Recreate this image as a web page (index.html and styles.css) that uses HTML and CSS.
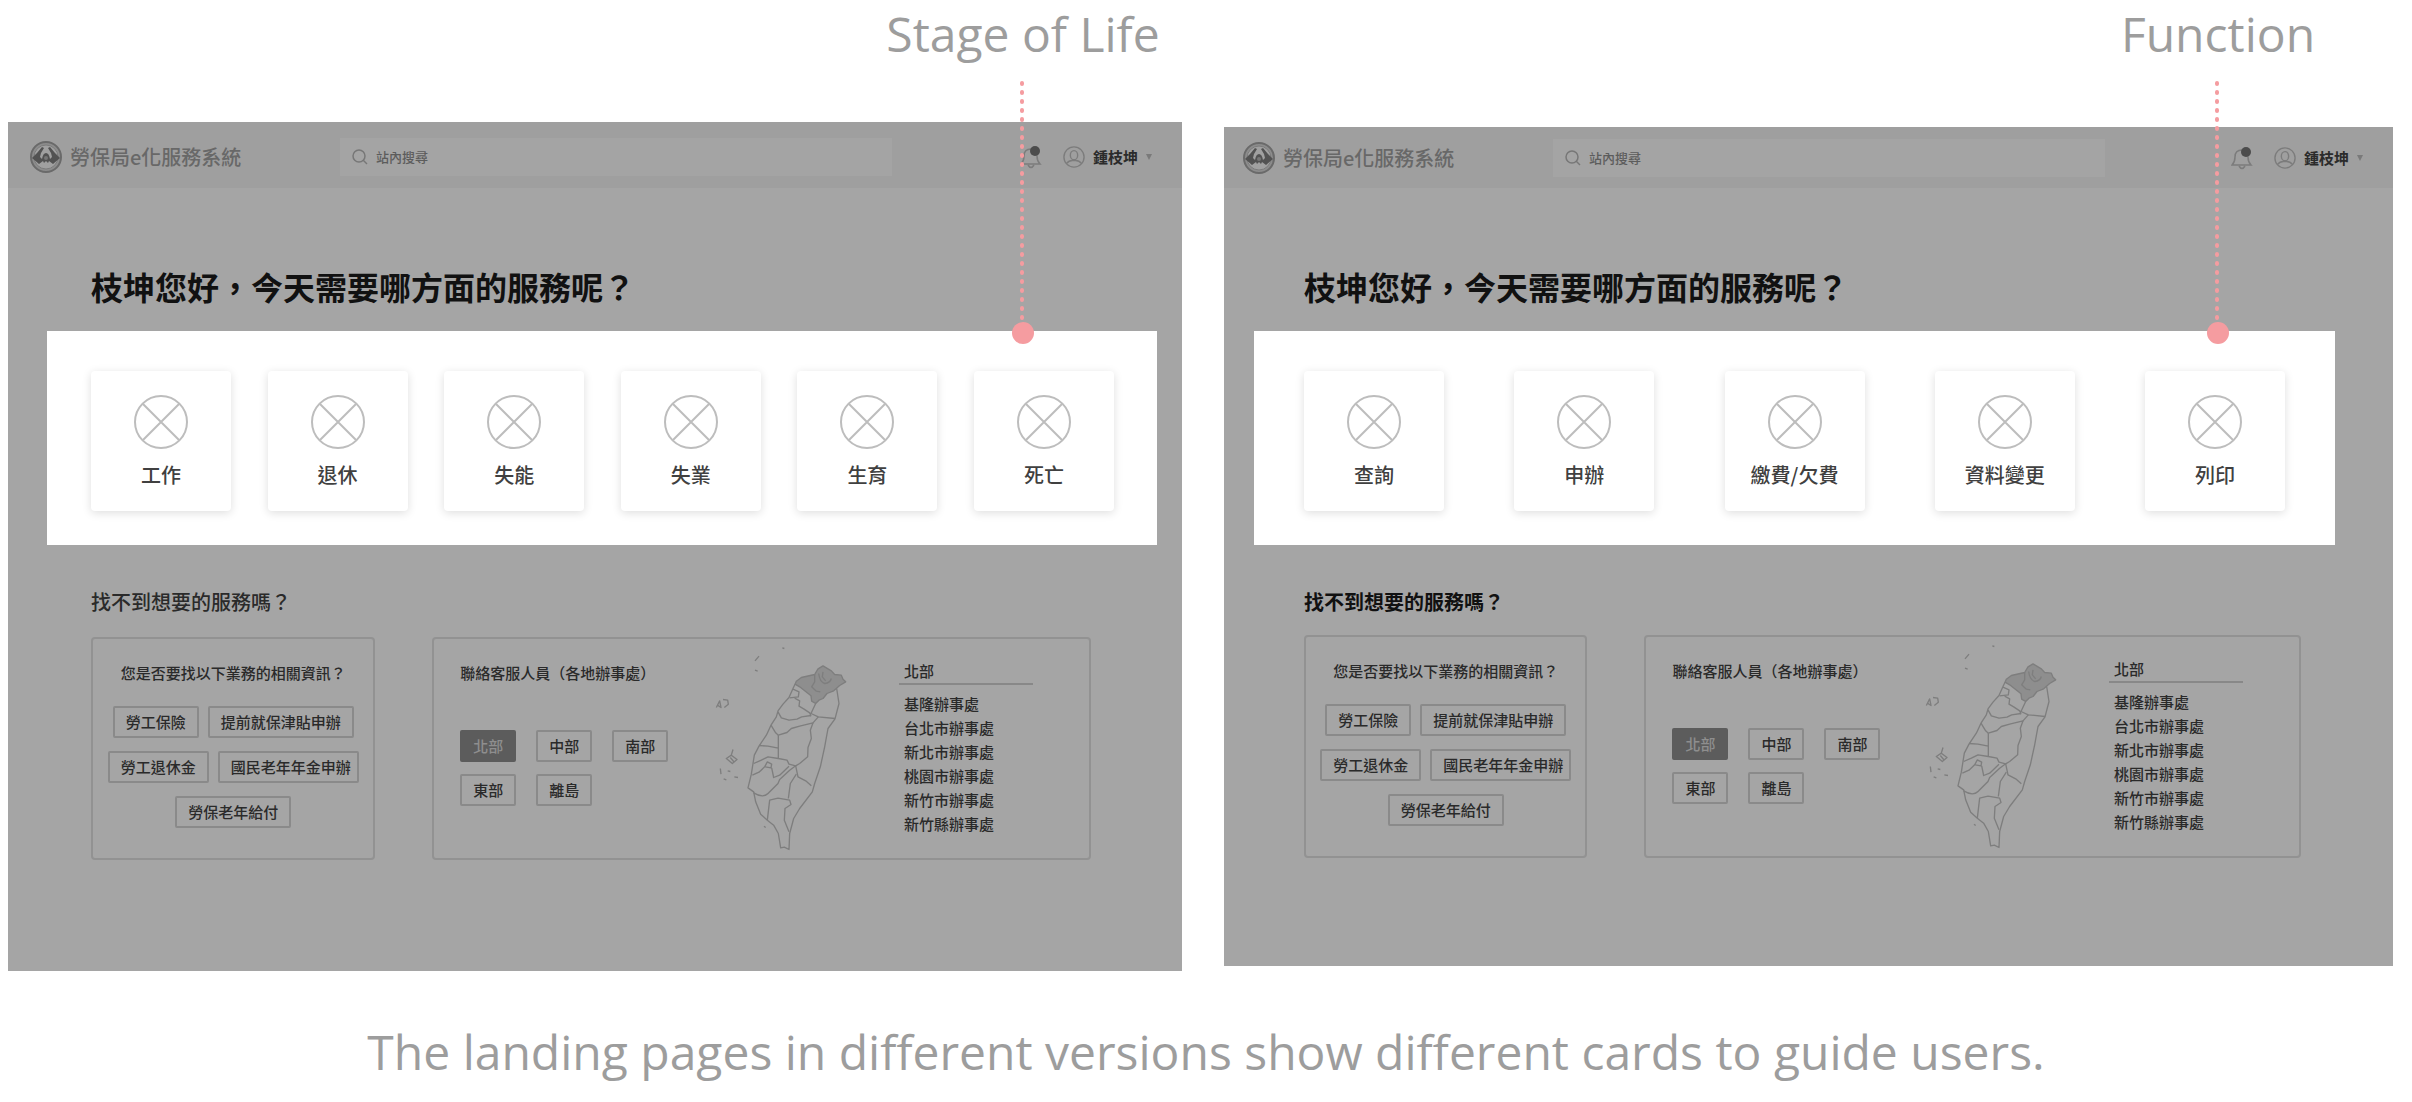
FILE: index.html
```html
<!DOCTYPE html>
<html lang="en">
<head>
<meta charset="utf-8">
<meta name="viewport" content="width=device-width, initial-scale=1">
<title>Landing page versions</title>
<link rel="stylesheet" href="styles.css">
</head>
<body>
<svg class="sprite" aria-hidden="true">
  <symbol id="logo" viewBox="0 0 34 34">
    <circle cx="17" cy="17" r="15" fill="#8c8c8c" stroke="#6a6a6a" stroke-width="2"/>
    <circle cx="17" cy="17" r="12" fill="#a0a0a0" stroke="#7c7c7c" stroke-width="1"/>
    <path d="M3 18 L8 13 L13 7 L15 8 L12 13 L11 17 L13 19 Q14 13 17 13 Q20 13 21 19 L23 17 L22 13 L19 8 L21 7 L26 13 L31 18 L24 24 L20 21 L19 23 L17 21 L15 23 L14 21 L10 24 Z" fill="#525252"/>
    <circle cx="17" cy="18" r="2" fill="#777"/>
  </symbol>
  <symbol id="search" viewBox="0 0 16 16">
    <circle cx="7" cy="7" r="6" fill="none" stroke="#777" stroke-width="1.5"/>
    <path d="M11 11 L15 15" stroke="#777" stroke-width="1.5"/>
  </symbol>
  <symbol id="bell" viewBox="0 0 22 24">
    <path d="M1 19 Q4 16 4 11 Q4 4 11 4 Q17 4 17 11 Q17 16 20 19 Z" fill="none" stroke="#7c7c7c" stroke-width="1.5"/>
    <path d="M8 20 Q11 25 14 20" fill="none" stroke="#7c7c7c" stroke-width="1.5"/>
    <circle cx="15" cy="6" r="5" fill="#4c4c4c"/>
  </symbol>
  <symbol id="user" viewBox="0 0 24 24">
    <g fill="none" stroke="#7c7c7c" stroke-width="1.5">
      <circle cx="12" cy="12" r="11"/>
      <ellipse cx="12" cy="10" rx="4" ry="5"/>
      <path d="M4 19 Q7 15 12 16 Q17 15 20 19"/>
    </g>
  </symbol>
  <symbol id="placeholder" viewBox="0 0 54 54">
    <g fill="none" stroke="#bdbdbd" stroke-width="2">
      <circle cx="27" cy="27" r="26"/>
      <path d="M9 9 L45 45 M45 9 L9 45"/>
    </g>
  </symbol>
  <symbol id="pointer" viewBox="0 0 24 264">
    <path d="M11 2 V244" stroke="#f59ca0" stroke-width="4" stroke-linecap="round" stroke-dasharray="1 8"/>
    <circle cx="12" cy="252" r="11" fill="#f59ca0"/>
  </symbol>
  <symbol id="taiwan" viewBox="40 75 405 620">
    <g fill="none" stroke="#7e7e7e" stroke-width="4" stroke-linejoin="round">
      <path fill="#8e8e8e" d="M290 183 L305 172 L345 163 L355 146 L370 137 L395 152 L405 163 L425 165 L430 177 L438 185 L420 196 L402 212 L382 220 L370 235 L358 240 L348 250 L336 243 L334 227 L318 214 L300 200 L286 192 Z"/>
      <path d="M345 163 L345 185 L336 200 L350 213 L362 215 M357 160 Q360 185 375 190 Q392 188 395 175 M370 155 L368 170 L378 182"/>
      <path d="M286 192 L280 205 L268 232 L250 252 L235 272 L230 290 L214 315 L200 345 L178 378 L164 405 L160 430 L155 462 L145 503 L162 515 L168 545 L183 582 L203 600 L222 615 L236 640 L243 683 L254 681 L268 688 L270 640 L282 595 L300 565 L338 515 L345 490 L362 440 L375 380 L385 325 L406 296 L418 250 L411 205"/>
      <path d="M280 207 L298 215 L296 230 L270 233 M285 234 L300 242 L298 258 L312 266 L330 278 L334 288 M348 250 L334 280 L356 290 L406 295"/>
      <path d="M235 275 L245 293 L268 300 L292 297 L306 290 L334 286 M214 315 L228 338 L236 345 L262 337 L275 325 L300 318 L340 308 L356 290"/>
      <path d="M236 345 L236 415 L262 420 L268 432 L288 437 L300 430 L324 410 L325 382 L335 355 L332 330 L340 308 M178 376 L205 378 L236 384 M162 430 L185 420 L205 410 L236 415"/>
      <path d="M158 465 L178 456 L195 440 L203 425 L216 432 L214 443 L197 440 M216 443 L222 472 L240 465 L268 438 M162 518 Q190 535 205 520 L235 490 L240 478 L270 450 L288 437 L295 470 L318 482 L335 497"/>
      <path d="M290 462 L272 490 L266 535 M203 600 L210 540 L235 534 L270 540 L274 553 L256 565 L254 600 L268 635"/>
      <path d="M50 262 L60 242 L64 262 L52 254 M70 238 L84 240 L86 252 L74 262 M166 122 L178 108 M166 150 L174 153 M248 83 L254 85 M80 415 L95 405 L112 418 L98 430 Z M92 412 L102 424 M95 405 L100 388 M62 445 L64 462 M84 452 L92 454 M72 476 L80 479 M104 470 L115 472 M193 618 L198 622"/>
    </g>
  </symbol>
</svg>

<main class="page">
  <div class="versions">
    <figure class="version version-life">
      <figcaption class="note">Stage of Life
        <svg class="pointer" aria-hidden="true"><use href="#pointer"/></svg>
      </figcaption>
      <section class="screen">
        <header class="topbar">
          <a class="brand" href="#"><svg class="logo" aria-hidden="true"><use href="#logo"/></svg>勞保局e化服務系統</a>
          <label class="search"><svg class="search-icon" aria-hidden="true"><use href="#search"/></svg><input type="search" placeholder="站內搜尋" aria-label="站內搜尋"></label>
          <div class="account">
            <button class="icon-button" type="button" aria-label="Notifications"><svg class="bell" aria-hidden="true"><use href="#bell"/></svg></button>
            <button class="user" type="button"><svg class="avatar" aria-hidden="true"><use href="#user"/></svg>鍾枝坤<span class="caret"></span></button>
          </div>
        </header>
        <div class="content">
          <h1 class="greeting">枝坤您好，今天需要哪方面的服務呢？</h1>
          <div class="cards">
            <button class="card" type="button"><svg class="card-icon" aria-hidden="true"><use href="#placeholder"/></svg>工作</button>
            <button class="card" type="button"><svg class="card-icon" aria-hidden="true"><use href="#placeholder"/></svg>退休</button>
            <button class="card" type="button"><svg class="card-icon" aria-hidden="true"><use href="#placeholder"/></svg>失能</button>
            <button class="card" type="button"><svg class="card-icon" aria-hidden="true"><use href="#placeholder"/></svg>失業</button>
            <button class="card" type="button"><svg class="card-icon" aria-hidden="true"><use href="#placeholder"/></svg>生育</button>
            <button class="card" type="button"><svg class="card-icon" aria-hidden="true"><use href="#placeholder"/></svg>死亡</button>
          </div>
          <h2 class="more">找不到想要的服務嗎？</h2>
          <div class="help">
            <section class="box topics">
              <h3 class="box-title">您是否要找以下業務的相關資訊？</h3>
              <div class="chips"><button class="chip" type="button">勞工保險</button><button class="chip" type="button">提前就保津貼申辦</button></div>
              <div class="chips"><button class="chip" type="button">勞工退休金</button><button class="chip chip-tight" type="button">國民老年年金申辦</button></div>
              <div class="chips"><button class="chip" type="button">勞保老年給付</button></div>
            </section>
            <section class="box contact">
              <div class="contact-main">
                <h3 class="box-title">聯絡客服人員（各地辦事處）</h3>
                <div class="regions">
                  <button class="region is-active" type="button">北部</button>
                  <button class="region" type="button">中部</button>
                  <button class="region" type="button">南部</button>
                  <button class="region" type="button">東部</button>
                  <button class="region" type="button">離島</button>
                </div>
              </div>
              <svg class="map" role="img" aria-label="北部"><use href="#taiwan"/></svg>
              <div class="offices">
                <h4 class="offices-title">北部</h4>
                <ul class="office-list">
                  <li>基隆辦事處</li>
                  <li>台北市辦事處</li>
                  <li>新北市辦事處</li>
                  <li>桃園市辦事處</li>
                  <li>新竹市辦事處</li>
                  <li>新竹縣辦事處</li>
                </ul>
              </div>
            </section>
          </div>
        </div>
      </section>
    </figure>

    <figure class="version version-function">
      <figcaption class="note">Function
        <svg class="pointer" aria-hidden="true"><use href="#pointer"/></svg>
      </figcaption>
      <section class="screen">
        <header class="topbar">
          <a class="brand" href="#"><svg class="logo" aria-hidden="true"><use href="#logo"/></svg>勞保局e化服務系統</a>
          <label class="search"><svg class="search-icon" aria-hidden="true"><use href="#search"/></svg><input type="search" placeholder="站內搜尋" aria-label="站內搜尋"></label>
          <div class="account">
            <button class="icon-button" type="button" aria-label="Notifications"><svg class="bell" aria-hidden="true"><use href="#bell"/></svg></button>
            <button class="user" type="button"><svg class="avatar" aria-hidden="true"><use href="#user"/></svg>鍾枝坤<span class="caret"></span></button>
          </div>
        </header>
        <div class="content">
          <h1 class="greeting">枝坤您好，今天需要哪方面的服務呢？</h1>
          <div class="cards">
            <button class="card" type="button"><svg class="card-icon" aria-hidden="true"><use href="#placeholder"/></svg>查詢</button>
            <button class="card" type="button"><svg class="card-icon" aria-hidden="true"><use href="#placeholder"/></svg>申辦</button>
            <button class="card" type="button"><svg class="card-icon" aria-hidden="true"><use href="#placeholder"/></svg>繳費/欠費</button>
            <button class="card" type="button"><svg class="card-icon" aria-hidden="true"><use href="#placeholder"/></svg>資料變更</button>
            <button class="card" type="button"><svg class="card-icon" aria-hidden="true"><use href="#placeholder"/></svg>列印</button>
          </div>
          <h2 class="more">找不到想要的服務嗎？</h2>
          <div class="help">
            <section class="box topics">
              <h3 class="box-title">您是否要找以下業務的相關資訊？</h3>
              <div class="chips"><button class="chip" type="button">勞工保險</button><button class="chip" type="button">提前就保津貼申辦</button></div>
              <div class="chips"><button class="chip" type="button">勞工退休金</button><button class="chip chip-tight" type="button">國民老年年金申辦</button></div>
              <div class="chips"><button class="chip" type="button">勞保老年給付</button></div>
            </section>
            <section class="box contact">
              <div class="contact-main">
                <h3 class="box-title">聯絡客服人員（各地辦事處）</h3>
                <div class="regions">
                  <button class="region is-active" type="button">北部</button>
                  <button class="region" type="button">中部</button>
                  <button class="region" type="button">南部</button>
                  <button class="region" type="button">東部</button>
                  <button class="region" type="button">離島</button>
                </div>
              </div>
              <svg class="map" role="img" aria-label="北部"><use href="#taiwan"/></svg>
              <div class="offices">
                <h4 class="offices-title">北部</h4>
                <ul class="office-list">
                  <li>基隆辦事處</li>
                  <li>台北市辦事處</li>
                  <li>新北市辦事處</li>
                  <li>桃園市辦事處</li>
                  <li>新竹市辦事處</li>
                  <li>新竹縣辦事處</li>
                </ul>
              </div>
            </section>
          </div>
        </div>
      </section>
    </figure>
  </div>
  <p class="summary">The landing pages in different versions show different cards to guide users.</p>
</main>
</body>
</html>
```
FILE: styles.css
```css
* {
  box-sizing: border-box;
}

body {
  margin: 0;
  background: #fff;
  color: #2a2a2a;
  font-family: "Noto Sans CJK TC", sans-serif;
}

h1, h2, h3, h4, p, ul, figure {
  margin: 0;
  padding: 0;
}

button, input {
  font: inherit;
  color: inherit;
}

button {
  padding: 0;
  border: 0;
  background: none;
  cursor: pointer;
}

.sprite {
  display: none;
}

.versions {
  display: grid;
  grid-template-columns: 1174fr 1169fr;
  align-items: start;
  gap: 42px;
  padding: 0 19px 0 8px;
}

.version {
  display: flex;
  flex-direction: column;
}

/* Callout above each screen */
.note {
  position: relative;
  align-self: flex-end;
  width: 318px;
  height: 122px;
  color: #9d9d9d;
  font-family: "Open Sans", sans-serif;
  font-size: 48px;
  line-height: 68px;
  text-align: center;
}

.version-function .note {
  width: 350px;
  height: 127px;
}

.pointer {
  position: absolute;
  top: 81px;
  left: 50%;
  z-index: 1;
  width: 24px;
  height: 264px;
  margin-left: -12px;
}

/* Screen */
.screen {
  background: #a5a5a5;
}

.topbar {
  display: flex;
  align-items: center;
  height: 66px;
  padding: 4px 30px 0 21px;
  background: #9f9f9f;
}

.version-function .topbar {
  height: 61px;
  padding: 0 30px 0 18px;
}

.brand {
  display: flex;
  align-items: center;
  gap: 7px;
  width: 311px;
  color: #686868;
  font-size: 20px;
  font-weight: 500;
  line-height: 30px;
  text-decoration: none;
}

.logo {
  width: 34px;
  height: 34px;
}

.search {
  display: flex;
  align-items: center;
  gap: 8px;
  width: 552px;
  height: 38px;
  padding: 0 12px;
  background: #a4a4a4;
}

.search-icon {
  width: 16px;
  height: 16px;
}

.search input {
  flex: 1;
  min-width: 0;
  padding: 0;
  border: 0;
  outline: 0;
  background: none;
  font-size: 13px;
  font-weight: 500;
  line-height: 20px;
}

.search input::placeholder {
  color: #5c5c5c;
  opacity: 1;
}

.account {
  display: flex;
  align-items: center;
  gap: 21px;
  margin-left: auto;
}

.icon-button {
  display: flex;
}

.bell {
  width: 22px;
  height: 24px;
}

.user {
  display: flex;
  align-items: center;
  gap: 8px;
  color: #2b2b2b;
  font-size: 15px;
  font-weight: 700;
  line-height: 24px;
}

.avatar {
  width: 22px;
  height: 22px;
}

.caret {
  border: 3px solid transparent;
  border-top: 6px solid #7a7a7a;
  border-bottom: 0;
}

.content {
  padding: 74px 91px 111px 83px;
}

.version-function .content {
  padding: 74px 92px 108px 80px;
}

.greeting {
  color: #111;
  font-size: 32px;
  font-weight: 700;
  line-height: 48px;
}

/* Highlighted strip reaches past the content column */
.cards {
  display: flex;
  justify-content: space-between;
  margin: 21px -66px 0 -44px;
  padding: 40px 43px 34px 44px;
  background: #fff;
}

.version-function .cards {
  margin: 21px -34px 0 -50px;
  padding: 40px 50px 34px;
}

.card {
  display: flex;
  flex-direction: column;
  align-items: center;
  gap: 11px;
  width: 140px;
  height: 140px;
  padding-top: 24px;
  border-radius: 4px;
  background: #fff;
  box-shadow: 0 2px 10px #0002;
  color: #404040;
  font-size: 20px;
  font-weight: 500;
  line-height: 30px;
}

.card-icon {
  width: 54px;
  height: 54px;
}

.more {
  margin: 42px 0 20px;
  font-size: 20px;
  font-weight: 500;
  line-height: 30px;
}

.version-function .more {
  margin-bottom: 18px;
  color: #111;
  font-weight: 700;
}

.help {
  display: grid;
  grid-template-columns: 284fr 658fr;
  gap: 57px;
}

.box {
  min-height: 223px;
  border: 2px solid #929292;
  border-radius: 4px;
}

.box-title {
  font-size: 15px;
  font-weight: 500;
  line-height: 20px;
}

.topics {
  display: flex;
  flex-direction: column;
  align-items: center;
  gap: 13px;
  padding-top: 24px;
}

.topics .box-title {
  margin-bottom: 10px;
}

.chips {
  display: flex;
  gap: 9px;
}

.chip,
.region {
  height: 32px;
  border: 2px solid #8a8a8a;
  border-radius: 2px;
  font-size: 15px;
  font-weight: 500;
  line-height: 20px;
}

.chip {
  padding: 0 11px;
}

.chip-tight {
  padding-right: 6px;
}

.contact {
  display: flex;
  align-items: flex-start;
  padding: 0 56px 0 26px;
}

.contact-main {
  flex: 1;
  padding-top: 24px;
}

.regions {
  display: grid;
  grid-template-columns: repeat(3, 56px);
  gap: 12px 20px;
  margin-top: 47px;
}

.region.is-active {
  border-color: #5c5c5c;
  background: #5c5c5c;
  color: #8e8e8e;
}

.map {
  width: 135px;
  height: 207px;
  margin: 6px 51px 0 0;
}

.offices {
  width: 134px;
  padding-top: 20px;
  font-size: 15px;
  font-weight: 500;
  line-height: 24px;
}

.offices-title {
  padding-left: 5px;
  border-bottom: 2px solid #888;
  font-size: 15px;
  font-weight: 500;
}

.office-list {
  margin-top: 7px;
  padding-left: 5px;
  list-style: none;
}

.summary {
  padding: 48px 24px 16px;
  color: #9d9d9d;
  font-family: "Open Sans", sans-serif;
  font-size: 48px;
  line-height: 66px;
  text-align: center;
}
```
